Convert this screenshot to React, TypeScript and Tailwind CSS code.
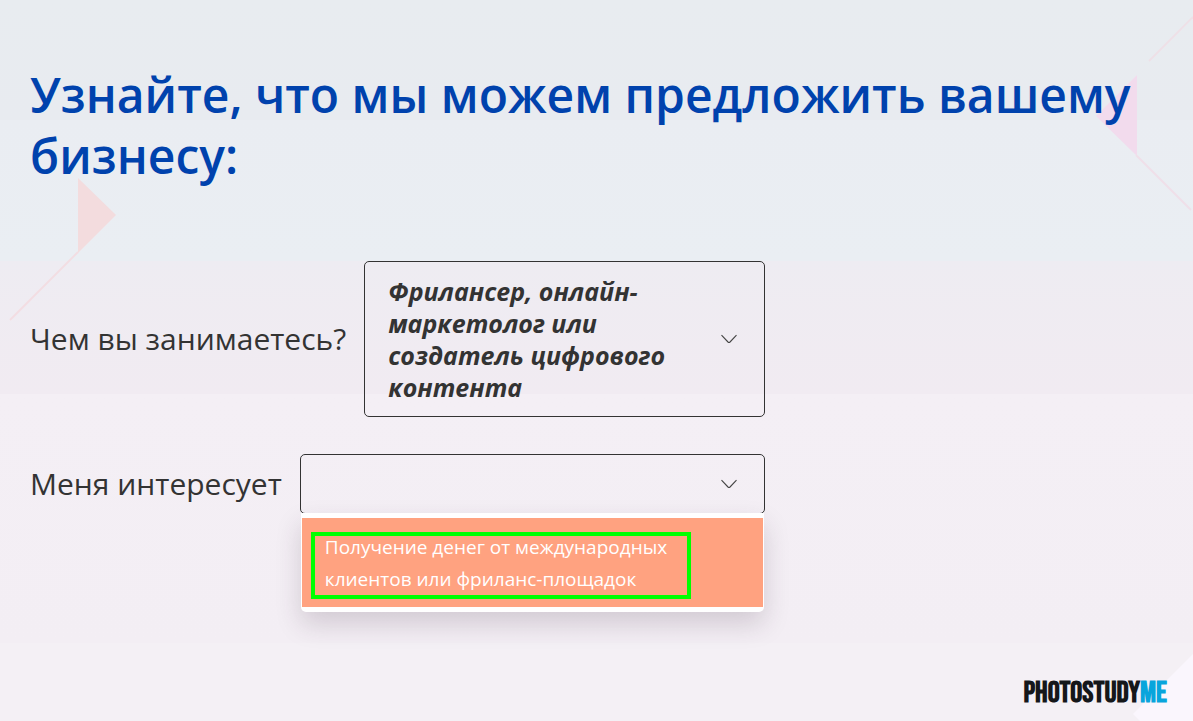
import { useState } from 'react';

const occupations = [
  'Фрилансер, онлайн-маркетолог или создатель цифрового контента',
];

const interests = ['Получение денег от международных клиентов или фриланс-площадок'];

function Chevron() {
  return (
    <svg
      className="pointer-events-none h-4 w-4 shrink-0"
      viewBox="0 0 16 16"
      fill="none"
      stroke="#444444"
      strokeWidth="1.1"
      aria-hidden="true"
    >
      <path d="M0.5 4.2 L7 11 Q8 12 9 11 L15.5 4.2" />
    </svg>
  );
}

function Backdrop() {
  return (
    <div className="pointer-events-none absolute inset-0 overflow-hidden" aria-hidden="true">
      <svg className="absolute top-0 left-0" width="130" height="330" viewBox="0 0 130 330" fill="none">
        <path d="M78 178 L116 215 L78 253 Z" fill="#f3dcde" />
        <path d="M78 252 L10 320" stroke="#f3dde2" strokeWidth="1.8" />
      </svg>
      <svg className="absolute top-0 right-0" width="100" height="220" viewBox="0 0 100 220" fill="none">
        <path d="M44 75 L3 116 L44 156 Z" fill="#f2dbed" />
        <path d="M43 155 L98 210" stroke="#f0dfe9" strokeWidth="1.8" />
        <path d="M56 61 L100 17" stroke="#eee0e7" strokeWidth="1.8" />
      </svg>
      <svg className="absolute right-0 bottom-0" width="60" height="68" viewBox="0 0 60 68">
        <path d="M60 1 L0 61 L7 68 L60 68 Z" fill="#faf6fd" />
      </svg>
    </div>
  );
}

export default function App() {
  const [occupation, setOccupation] = useState(occupations[0]);
  const [interest, setInterest] = useState('');
  const [menuOpen, setMenuOpen] = useState(true);

  const pick = (value: string) => {
    setInterest(value);
    setMenuOpen(false);
  };

  return (
    <main className="relative flex min-h-screen flex-col bg-[linear-gradient(to_bottom,#e8ecf0_0,#e8ebf0_120px,#eaedf2_120px,#eaeef3_261px,#eeecf2_261px,#f1ebf2_394px,#f4eff5_394px,#f3eef4_643px,#f4f0f5_643px)] font-['Open_Sans','Noto_Sans',sans-serif] text-[#333333]">
      <Backdrop />

      <div className="relative flex-1 px-[30px] pt-16">
        <h1 className="text-5xl leading-[61px] font-semibold text-[#0042ad]">
          Узнайте, что мы можем предложить вашему бизнесу:
        </h1>

        <form className="mt-[75px] flex max-w-[735px] flex-col gap-[37px]">
          <div className="flex items-center gap-[18px]">
            <label htmlFor="occupation" className="shrink-0 text-[30px] leading-10">
              Чем вы занимаетесь?
            </label>
            <div className="relative flex min-w-0 flex-1 items-center justify-between rounded-[5px] border border-[#333333] py-[13px] pr-[27px] pl-[23px]">
              {/* native select can't wrap its value, so it lies over the wrapped text */}
              <span className="max-w-[290px] text-[25px] leading-8 font-bold italic" aria-hidden="true">
                {occupation}
              </span>
              <Chevron />
              <select
                id="occupation"
                value={occupation}
                onChange={(e) => setOccupation(e.target.value)}
                className="absolute inset-0 h-full w-full cursor-pointer opacity-0"
              >
                {occupations.map((item) => (
                  <option key={item}>{item}</option>
                ))}
              </select>
            </div>
          </div>

          <div className="flex items-center gap-[18px]">
            <label htmlFor="interest" className="shrink-0 text-[30px] leading-10">
              Меня интересует
            </label>
            <div className="relative min-w-0 flex-1">
              <div className="flex h-[60px] items-center rounded-[5px] border border-[#333333] pr-[27px]">
                <select
                  id="interest"
                  value={interest}
                  onChange={(e) => pick(e.target.value)}
                  className="h-full min-w-0 flex-1 cursor-pointer appearance-none truncate bg-transparent pl-[23px] text-[25px] font-bold italic outline-none"
                >
                  <option value="" />
                  {interests.map((item) => (
                    <option key={item}>{item}</option>
                  ))}
                </select>
                <Chevron />
              </div>

              {menuOpen && (
                <ul className="absolute inset-x-px top-[59px] rounded-b-[5px] bg-white px-px py-[5px] shadow-[0_12px_26px_rgba(60,40,60,0.18)]">
                  {interests.map((item) => (
                    <li key={item} className="relative">
                      <button
                        type="button"
                        onClick={() => pick(item)}
                        className="block w-full cursor-pointer bg-[#ffa280] pt-[13px] pr-[80px] pb-3 pl-[23px] text-left text-[19px] leading-8 text-white"
                      >
                        {item}
                      </button>
                      <span className="pointer-events-none absolute top-3.5 left-[9px] h-[67px] w-[380px] max-w-full border-4 border-[#00ff00]" />
                    </li>
                  ))}
                </ul>
              )}
            </div>
          </div>
        </form>
      </div>

      <footer className="relative flex justify-end px-[26px] pb-3">
        <a
          href="#"
          className="font-['Bebas_Neue','Roboto_Condensed','Liberation_Sans',sans-serif] text-[30px] leading-8 font-bold text-[#15171a]"
        >
          PHOTOSTUDY<span className="text-[#08a5dc]">ME</span>
        </a>
      </footer>
    </main>
  );
}
